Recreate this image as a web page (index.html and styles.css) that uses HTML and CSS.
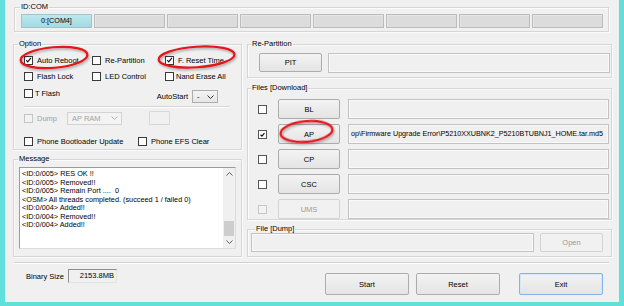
FILE: index.html
```html
<!DOCTYPE html>
<html>
<head>
<meta charset="utf-8">
<link rel="stylesheet" href="styles.css">
</head>
<body>
<div class="window">
  <fieldset class="group idcom">
    <legend>ID:COM</legend>
    <div class="ports">
      <div class="port active">0:[COM4]</div>
      <div class="port"></div>
      <div class="port"></div>
      <div class="port"></div>
      <div class="port"></div>
      <div class="port"></div>
      <div class="port"></div>
      <div class="port"></div>
    </div>
  </fieldset>

  <div class="main">
    <div class="leftcol">
      <fieldset class="group option">
        <legend>Option</legend>
        <div class="optgrid">
          <label class="chk"><span class="cb"><svg class="tick" viewBox="0 0 9 9"><path d="M1.6 4.6 L3.6 6.8 L7.6 1.8"/></svg></span>Auto Reboot</label>
          <label class="chk"><span class="cb"></span>Re-Partition</label>
          <label class="chk"><span class="cb"><svg class="tick" viewBox="0 0 9 9"><path d="M1.6 4.6 L3.6 6.8 L7.6 1.8"/></svg></span>F. Reset Time</label>
          <label class="chk"><span class="cb"></span>Flash Lock</label>
          <label class="chk"><span class="cb"></span>LED Control</label>
          <label class="chk tight"><span class="cb"></span>Nand Erase All</label>
        </div>
        <div class="row3">
          <label class="chk tight"><span class="cb"></span>T Flash</label>
          <span class="autostart">AutoStart</span>
          <span class="combo small"><span>-</span><svg class="chev" viewBox="0 0 7 4"><path d="M0.5 0.5 L3.5 3.5 L6.5 0.5"/></svg></span>
        </div>
        <div class="sep"></div>
        <div class="row4">
          <label class="chk disabled dumpchk"><span class="cb"></span>Dump</label>
          <span class="combo dis"><span>AP RAM</span><svg class="chev" viewBox="0 0 7 4"><path d="M0.5 0.5 L3.5 3.5 L6.5 0.5"/></svg></span>
          <span class="smallbox"></span>
        </div>
        <div class="row5">
          <label class="chk pbu"><span class="cb"></span>Phone Bootloader Update</label>
          <label class="chk"><span class="cb"></span>Phone EFS Clear</label>
        </div>
      </fieldset>

      <fieldset class="group message">
        <legend>Message</legend>
        <div class="msgbox">
          <div class="msgtext">
            <div>&lt;ID:0/005&gt; RES OK !!</div>
            <div>&lt;ID:0/005&gt; Removed!!</div>
            <div>&lt;ID:0/005&gt; Remain Port ....&nbsp; 0</div>
            <div>&lt;OSM&gt; All threads completed. (succeed 1 / failed 0)</div>
            <div>&lt;ID:0/004&gt; Added!!</div>
            <div>&lt;ID:0/004&gt; Removed!!</div>
            <div>&lt;ID:0/004&gt; Added!!</div>
          </div>
          <div class="scroll">
            <div class="arrow"><svg class="chev" viewBox="0 0 7 4"><path d="M0.5 3.5 L3.5 0.5 L6.5 3.5"/></svg></div>
            <div class="track"><div class="thumb"></div></div>
            <div class="arrow"><svg class="chev" viewBox="0 0 7 4"><path d="M0.5 0.5 L3.5 3.5 L6.5 0.5"/></svg></div>
          </div>
        </div>
      </fieldset>
    </div>

    <div class="rightcol">
      <fieldset class="group repart">
        <legend>Re-Partition</legend>
        <div class="rprow">
          <button class="btn pit">PIT</button>
          <div class="field"></div>
        </div>
      </fieldset>

      <fieldset class="group files">
        <legend>Files [Download]</legend>
        <div class="frow">
          <span class="cb"></span>
          <button class="btn fbtn">BL</button>
          <div class="field"></div>
        </div>
        <div class="frow">
          <span class="cb"><svg class="tick small" viewBox="0 0 9 9"><path d="M2 4.8 L3.8 6.6 L7 2.6"/></svg></span>
          <button class="btn fbtn">AP</button>
          <div class="field path">op\Firmware Upgrade Error\P5210XXUBNK2_P5210BTUBNJ1_HOME.tar.md5</div>
        </div>
        <div class="frow">
          <span class="cb"></span>
          <button class="btn fbtn">CP</button>
          <div class="field"></div>
        </div>
        <div class="frow">
          <span class="cb"></span>
          <button class="btn fbtn">CSC</button>
          <div class="field"></div>
        </div>
        <div class="frow">
          <span class="cb dis"></span>
          <button class="btn fbtn dis">UMS</button>
          <div class="field"></div>
        </div>
      </fieldset>

      <fieldset class="group dump">
        <legend>File [Dump]</legend>
        <div class="drow">
          <div class="field"></div>
          <button class="btn open dis">Open</button>
        </div>
      </fieldset>
    </div>
  </div>

  <div class="bottom">
    <div class="binary">
      <span>Binary Size</span>
      <span class="binbox">2153.8MB</span>
    </div>
    <div class="buttons">
      <button class="btn big start">Start</button>
      <button class="btn big reset">Reset</button>
      <button class="btn big exit">Exit</button>
    </div>
  </div>

  <svg class="marks" viewBox="0 0 624 306" width="624" height="306">
    <defs>
      <filter id="sh" x="-20%" y="-40%" width="140%" height="180%">
        <feDropShadow dx="1" dy="1.5" stdDeviation="0.8" flood-color="#000" flood-opacity="0.35"/>
      </filter>
    </defs>
    <g fill="none" stroke="#e3131b" stroke-width="2.2" filter="url(#sh)">
      <ellipse cx="54" cy="57.5" rx="33.5" ry="10.3" transform="rotate(-5 54 57.5)"/>
      <ellipse cx="196.5" cy="57" rx="38" ry="10.3" transform="rotate(-4 196.5 57)"/>
      <ellipse cx="306.5" cy="131.5" rx="26" ry="10.3" transform="rotate(-5 306.5 131.5)"/>
    </g>
  </svg>
</div>
</body>
</html>
```

FILE: styles.css
```css
* { box-sizing: border-box; }
html, body { margin: 0; padding: 0; }
body {
  width: 624px;
  height: 306px;
  overflow: hidden;
  font-family: "Liberation Sans", Arial, sans-serif;
  font-size: 7.5px;
  color: #000;
  background: #f0f0f0;
}
.window {
  position: relative;
  width: 624px;
  height: 306px;
  background: #f0f0f0;
  border-left: 5px solid #62dfdb;
  border-right: 5px solid #62dfdb;
  border-bottom: 4px solid #62dfdb;
  padding-top: 3px;
}
.group {
  margin: 0;
  min-width: 0;
  border: 1px solid #d6d6d6;
  box-shadow: inset 1px 1px 0 #fbfbfb, 1px 1px 0 #fbfbfb;
}
legend {
  padding: 0 1px;
  line-height: 8px;
  font-size: 7.5px;
  color: #000;
}

/* ID:COM */
.idcom {
  margin-left: 9px;
  width: 595px;
  height: 29px;
  padding: 0 0 0 6px;
}
.idcom legend { margin-left: -1px; }
.ports { display: flex; gap: 2px; margin-top: 3px; }
.port {
  width: 71px;
  height: 14px;
  border: 1px solid #bcbcbc;
  background: #dcdcdc;
  box-shadow: inset 1px 1px 0 #e6e6e6;
  text-align: center;
  line-height: 12px;
  font-size: 7.2px;
}
.port.active {
  background: linear-gradient(#bde8ee, #a3dae2);
  border-color: #9fc5cb;
  box-shadow: none;
}

/* main */
.main { display: flex; gap: 5px; margin: 8px 0 0 8px; }
.leftcol { width: 229px; display: flex; flex-direction: column; gap: 5px; }
.rightcol { width: 365px; display: flex; flex-direction: column; }

/* checkboxes */
.chk { display: flex; align-items: center; height: 14px; white-space: nowrap; }
.cb {
  width: 9px;
  height: 9px;
  flex: none;
  border: 1px solid #3a3a3a;
  background: #fff;
  margin-right: 4px;
  display: flex;
  align-items: center;
  justify-content: center;
}
.chk.tight .cb { margin-right: 2px; }
.tick { width: 8px; height: 8px; }
.tick path { fill: none; stroke: #111; stroke-width: 1.5; }
.tick.small { width: 7px; height: 7px; }
.chk.disabled { color: #a2a2a2; }
.chk.disabled .cb, .cb.dis { border-color: #c4c4c4; background: #f2f2f2; }

/* option */
.option { height: 110px; padding: 5px 6px 0 10px; }
.option legend { margin-left: -6px; }
.optgrid { display: grid; grid-template-columns: 68px 73px auto; row-gap: 2px; }
.row3 { display: flex; height: 17px; margin-top: 3px; }
.row3 .chk { align-self: flex-start; }
.autostart { align-self: flex-end; line-height: 13px; margin-left: auto; margin-right: 4px; }
.combo {
  height: 13px;
  border: 1px solid #adadad;
  background: linear-gradient(#f4f4f4, #e6e6e6);
  display: flex;
  align-items: center;
  justify-content: space-between;
  padding: 0 3px 0 4px;
}
.combo.small { width: 26px; align-self: flex-end; margin-right: 17px; }
.chev { width: 7px; height: 4px; }
.chev path { fill: none; stroke: #333; stroke-width: 1; }
.combo.dis { border-color: #d2d2d2; background: #f3f3f3; color: #a2a2a2; width: 55px; }
.combo.dis .chev path { stroke: #b0b0b0; }
.sep { width: 206px; height: 2px; margin-top: 3px; border-top: 1px solid #d5d5d5; border-bottom: 1px solid #fff; }
.row4 { display: flex; align-items: center; height: 14px; margin-top: 3px; }
.dumpchk { width: 43px; }
.smallbox { width: 21px; height: 14px; margin-left: 27px; border: 1px solid #d8d8d8; background: #f0f0f0; }
.row5 { display: flex; height: 14px; margin-top: 9px; }
.pbu { width: 114px; }

/* message */
.message { height: 102px; padding: 4px 5px 0 5px; }
.message legend { margin-left: -1px; }
.msgbox {
  height: 82px;
  border: 1px solid #9c9c9c;
  border-right-color: #dcdcdc;
  border-bottom-color: #dcdcdc;
  background: #fff;
  display: flex;
}
.msgtext {
  flex: 1;
  padding: 2px 0 0 2px;
  font-size: 7.3px;
  line-height: 8.5px;
  white-space: nowrap;
  overflow: hidden;
}
.scroll { width: 12px; background: #f0f0f0; display: flex; flex-direction: column; }
.scroll .arrow { height: 12px; display: flex; align-items: center; justify-content: center; }
.scroll .arrow .chev path { stroke: #606060; }
.track { flex: 1; }
.thumb { margin: 41px 1px 0 1px; height: 15px; background: #cdcdcd; }

/* buttons & fields */
.btn {
  font-family: inherit;
  font-size: 7.5px;
  color: #000;
  margin: 0;
  padding: 0;
  border: 1px solid #acacac;
  border-radius: 2px;
  background: linear-gradient(#f3f3f3, #e4e4e4);
  flex: none;
}
.btn.dis { color: #9a9a9a; border-color: #d3d3d3; background: #f1f1f1; }
.field {
  flex: 1;
  height: 20px;
  border: 1px solid #c3c3c3;
  box-shadow: inset 0 0 0 1px #f9f9f9;
  background: #f0f0f0;
}

/* re-partition */
.repart { height: 38px; padding: 5px 1px 0 11px; }
.repart legend { margin-left: -8px; }
.rprow { display: flex; gap: 6px; align-items: flex-start; }
.pit { width: 63px; height: 19px; }

/* files */
.files { margin-top: 6px; height: 136px; padding: 7px 2px 0 10px; }
.files legend { margin-left: -7px; }
.frow { display: flex; align-items: center; height: 20px; margin-bottom: 5px; }
.frow .cb { margin-right: 11px; border-color: #555; }
.frow .cb.dis { border-color: #c8c8c8; }
.fbtn { width: 62px; height: 20px; }
.frow .field { margin-left: 8px; }
.field.path {
  font-size: 7.2px;
  line-height: 18px;
  padding-left: 2px;
  white-space: nowrap;
  overflow: hidden;
  color: #000;
}

/* dump */
.dump { margin-top: 5px; height: 32px; padding: 0 8px 0 3px; }
.dump legend { margin-left: 4px; }
.drow { display: flex; gap: 6px; }
.drow .field { height: 19px; }
.open { width: 63px; height: 19px; }

/* bottom */
.bottom {
  margin: 5px 0 0 9px;
  width: 595px;
  border-top: 1px solid #d0d0d0;
  box-shadow: inset 0 1px 0 #fff;
  display: flex;
  align-items: flex-start;
  padding: 0 6px 0 12px;
}
.binary { display: flex; align-items: center; gap: 4px; margin-top: 6px; }
.binbox {
  width: 49px;
  height: 14px;
  border: 1px solid;
  border-color: #8e8e8e #e2e2e2 #e2e2e2 #8e8e8e;
  text-align: right;
  padding-right: 2px;
  line-height: 12px;
}
.buttons { margin-left: auto; margin-top: 10px; display: flex; }
.big { width: 84px; height: 22px; }
.start { margin-right: 7px; }
.reset { margin-right: 19px; }
.exit { border-color: #7fb5ea; box-shadow: inset 0 0 0 1px #d5e8fa; }

/* red annotation marks */
.marks { position: absolute; left: -5px; top: 0; pointer-events: none; }
```
